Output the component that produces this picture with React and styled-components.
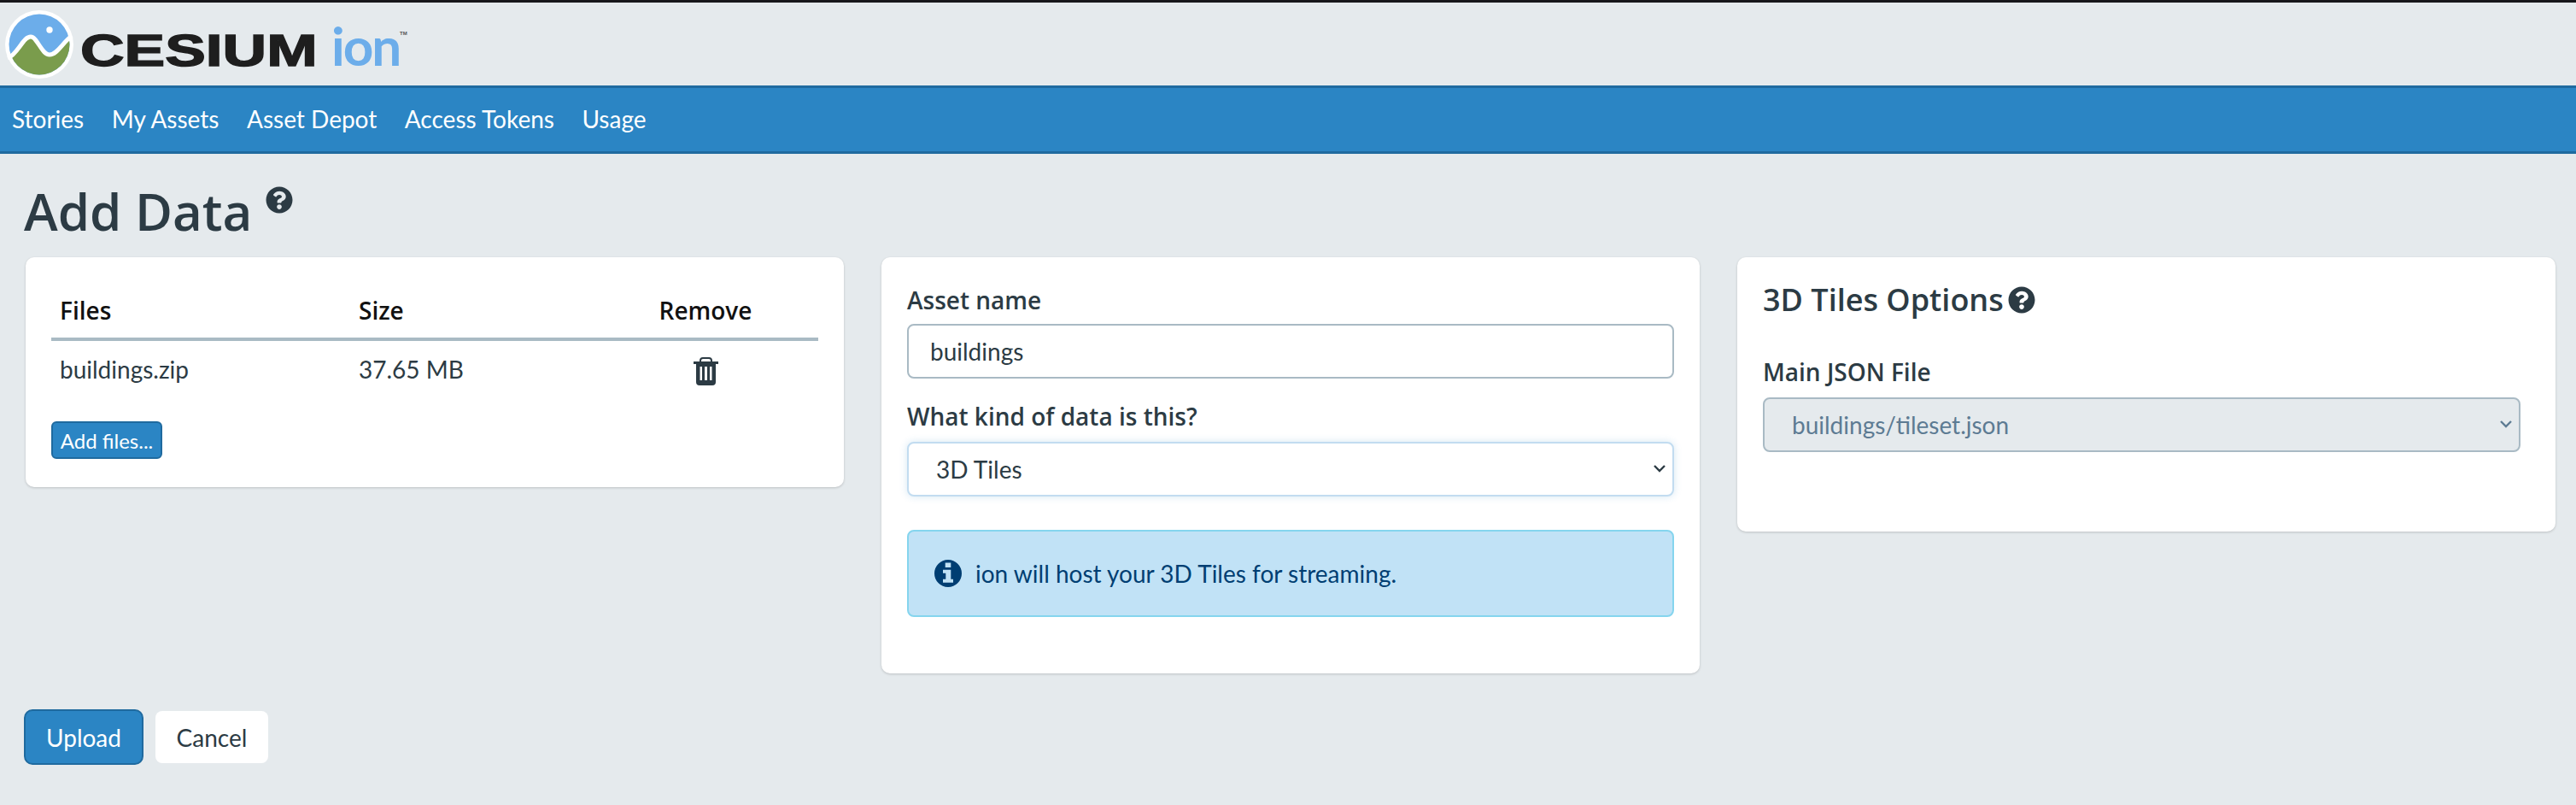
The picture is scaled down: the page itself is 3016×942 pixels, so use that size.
import React from 'react';
import styled, { createGlobalStyle } from 'styled-components';
import { FaQuestionCircle } from 'react-icons/fa';

const GlobalStyle = createGlobalStyle`
  html, body {
    margin: 0;
    padding: 0;
    background: #e5eaed;
  }
  body {
    font-family: Lato, "Liberation Sans", sans-serif;
    font-size: 28px;
    color: #2c3b44;
  }
`;

const Logo = () => (
  <LogoSvg viewBox="0 0 490 84" width="490" height="84">
    <defs>
      <clipPath id="globe">
        <circle cx="40" cy="40" r="35.5" />
      </clipPath>
    </defs>
    <circle cx="40" cy="40" r="40" fill="#fff" />
    <g clipPath="url(#globe)">
      <rect width="80" height="80" fill="#6cadea" />
      <path d="M3 56C11 53 16 43 22 36c4-5 9-7 13-2 6 7 10 18 17 18 9 0 15-14 26-22v50H3z" fill="#7a9c4c" />
    </g>
    <path d="M3 56C11 53 16 43 22 36c4-5 9-7 13-2 6 7 10 18 17 18 9 0 15-14 26-22" fill="none" stroke="#fff" strokeWidth="5" />
    <circle cx="52" cy="23" r="3.7" fill="#fff" />
    <text transform="translate(88 65) scale(1.4 1)" fontFamily="Liberation Sans" fontWeight="700" fontSize="51" fill="#1e1e1e" stroke="#1e1e1e" strokeWidth="1.4">
      CESIUM
    </text>
    <text x="382" y="65" fontFamily="Lato" fontWeight="700" fontSize="62" letterSpacing="-2" fill="#6cadea">
      ion
    </text>
    <text x="462" y="29" fontFamily="Liberation Sans" fontWeight="700" fontSize="6" fill="#555">
      TM
    </text>
  </LogoSvg>
);

const TrashIcon = () => (
  <svg viewBox="0 0 29 33" width="29" height="33">
    <path d="M8 6V4q0-3 3-3h7q3 0 3 3v2" fill="none" stroke="#2c3b44" strokeWidth="2" />
    <path
      fill="#2c3b44"
      fillRule="evenodd"
      d="M0 5h29v3h-3v21q0 4-4 4H7q-4 0-4-4V8H0zM7.500 11v16H10V11zM13 11v16h3V11zM19 11v16h2.500V11z"
    />
  </svg>
);

const InfoIcon = () => (
  <svg viewBox="0 0 32 32" width="32" height="32">
    <path
      fill="#003e72"
      fillRule="evenodd"
      d="M16 0a16 16 0 1 1 0 32a16 16 0 0 1 0-32zM12.700 3.500v5.500h6.600V3.500zM10 11.700v4h3.300v7H10v4h12v-4h-2.700v-11z"
    />
  </svg>
);

const Chevron = () => (
  <ChevronSvg viewBox="0 0 14 9" width="14" height="9">
    <path d="M1 1l6 6 6-6" fill="none" stroke="currentColor" strokeWidth="2.400" />
  </ChevronSvg>
);

const App = () => {
  return (
    <>
      <GlobalStyle />
      <Header>
        <Logo />
      </Header>
      <Nav>
        <NavLink>Stories</NavLink>
        <NavLink>My Assets</NavLink>
        <NavLink>Asset Depot</NavLink>
        <NavLink>Access Tokens</NavLink>
        <NavLink>Usage</NavLink>
      </Nav>
      <Main>
        <TitleRow>
          <Title>Add Data</Title>
          <TitleHelp>
            <FaQuestionCircle size={32} />
          </TitleHelp>
        </TitleRow>
        <Cards>
          <FilesCard>
            <FilesTable>
              <thead>
                <tr>
                  <FilesHead>Files</FilesHead>
                  <SizeHead>Size</SizeHead>
                  <RemoveHead>Remove</RemoveHead>
                </tr>
              </thead>
              <tbody>
                <tr>
                  <Cell>buildings.zip</Cell>
                  <Cell>37.65 MB</Cell>
                  <RemoveCell>
                    <TrashIcon />
                  </RemoveCell>
                </tr>
              </tbody>
            </FilesTable>
            <SmallButton>Add files...</SmallButton>
          </FilesCard>

          <FormCard>
            <Label>Asset name</Label>
            <TextInput defaultValue="buildings" />
            <Label>What kind of data is this?</Label>
            <KindSelectWrap>
              <Select $focused defaultValue="3D Tiles">
                <option>3D Tiles</option>
              </Select>
              <Chevron />
            </KindSelectWrap>
            <Alert>
              <InfoIcon />
              <span>ion will host your 3D Tiles for streaming.</span>
            </Alert>
          </FormCard>

          <OptionsCard>
            <OptionsTitle>
              3D Tiles Options
              <FaQuestionCircle size={32} />
            </OptionsTitle>
            <OptionsLabel>Main JSON File</OptionsLabel>
            <DisabledSelectWrap>
              <Select $disabled disabled defaultValue="buildings/tileset.json">
                <option>buildings/tileset.json</option>
              </Select>
              <Chevron />
            </DisabledSelectWrap>
          </OptionsCard>
        </Cards>
        <Actions>
          <PrimaryButton>Upload</PrimaryButton>
          <CancelButton>Cancel</CancelButton>
        </Actions>
      </Main>
    </>
  );
};

export default App;

const Header = styled.header`
  border-top: 3px solid #17171b;
  display: flex;
  align-items: flex-start;
  padding: 9px 0 0 6px;
  box-sizing: border-box;
  height: 100px;
`;

const LogoSvg = styled.svg`
  display: block;
`;

const Nav = styled.nav`
  height: 80px;
  box-sizing: border-box;
  background: #2b85c4;
  border-top: 3px solid #1f6a9f;
  border-bottom: 3px solid #1f6a9f;
  display: flex;
  align-items: center;
  gap: 32.5px;
  padding: 0 14px 2px;
`;

const NavLink = styled.a`
  color: #fff;
  font-size: 28px;
`;

const Main = styled.main`
  padding: 0 24px 0 28px;
`;

const TitleRow = styled.div`
  display: flex;
  align-items: flex-start;
  height: 121px;
  padding-top: 25px;
  box-sizing: border-box;
`;

const Title = styled.h1`
  margin: 0;
  font-family: "Open Sans", sans-serif;
  font-weight: 600;
  font-size: 60px;
  line-height: 84px;
  color: #2c3b44;
`;

const TitleHelp = styled.span`
  margin: 13px 0 0 16px;
  line-height: 0;
`;

const Cards = styled.div`
  display: grid;
  grid-template-columns: 958px 958px 958px;
  column-gap: 44px;
  align-items: start;
  margin-left: 2px;
`;

const Card = styled.section`
  background: #fff;
  border-radius: 10px;
  box-shadow: 0 1px 3px rgba(0, 0, 0, 0.18);
  box-sizing: border-box;
`;

const FilesCard = styled(Card)`
  height: 269px;
  padding: 30px 30px 0;
`;

const FormCard = styled(Card)`
  height: 487px;
  padding: 30px 30px 0;
`;

const OptionsCard = styled(Card)`
  height: 321px;
  padding: 30px 41px 0 30px;
`;

const FilesTable = styled.table`
  width: 100%;
  border-collapse: collapse;
  table-layout: fixed;
  margin-bottom: 28px;
`;

const HeadCell = styled.th`
  font-family: "Open Sans", sans-serif;
  font-weight: 600;
  text-align: left;
  color: #111;
  padding: 0 10px;
  height: 64px;
  border-bottom: 4px solid #a9bac4;
`;

const FilesHead = styled(HeadCell)`
  width: 330px;
`;

const SizeHead = styled(HeadCell)`
  width: 264px;
`;

const RemoveHead = styled(HeadCell)`
  text-align: center;
`;

const Cell = styled.td`
  padding: 0 10px;
  height: 62px;
  font-size: 28px;
`;

const RemoveCell = styled(Cell)`
  text-align: center;
  padding-top: 4px;
  line-height: 0;
`;

const SmallButton = styled.button`
  display: block;
  width: 130px;
  height: 44px;
  padding: 0;
  background: #2b85c4;
  border: 2px solid #1f6a9f;
  border-radius: 6px;
  color: #fff;
  font-family: Lato, sans-serif;
  font-size: 24px;
`;

const Label = styled.label`
  display: block;
  font-family: "Open Sans", sans-serif;
  font-weight: 600;
  font-size: 28px;
  line-height: 40px;
  margin-bottom: 8px;
`;

const TextInput = styled.input`
  display: block;
  width: 100%;
  height: 64px;
  box-sizing: border-box;
  border: 2px solid #a9bac4;
  border-radius: 8px;
  padding: 0 25px;
  margin-bottom: 24px;
  font-family: Lato, sans-serif;
  font-size: 28px;
  color: #2c3b44;
`;

const SelectWrap = styled.div`
  position: relative;
`;

const KindSelectWrap = styled(SelectWrap)`
  margin-top: 10px;
  color: #2c3b44;
`;

const DisabledSelectWrap = styled(SelectWrap)`
  color: #5d7b93;
`;

const Select = styled.select`
  display: block;
  width: 100%;
  height: 64px;
  box-sizing: border-box;
  appearance: none;
  border-radius: 8px;
  padding: 0 32px;
  font-family: Lato, sans-serif;
  font-size: 28px;
  opacity: 1;
  color: ${({ $disabled }) => ($disabled ? '#5d7b93' : '#2c3b44')};
  background: ${({ $disabled }) => ($disabled ? '#e5eaed' : '#fff')};
  border: 2px solid ${({ $focused }) => ($focused ? '#c2dcf0' : '#a9bac4')};
  box-shadow: ${({ $focused }) => ($focused ? '0 0 10px rgba(43, 133, 196, 0.2)' : 'none')};
`;

const ChevronSvg = styled.svg`
  position: absolute;
  right: 10px;
  top: 27px;
`;

const Alert = styled.div`
  display: flex;
  align-items: center;
  gap: 16px;
  height: 102px;
  box-sizing: border-box;
  margin-top: 39px;
  padding: 0 30px;
  background: #c1e2f6;
  border: 2px solid #85d5ee;
  border-radius: 8px;
  color: #003e72;
`;

const OptionsTitle = styled.h2`
  margin: 0 0 44px;
  display: flex;
  align-items: center;
  gap: 5px;
  font-family: "Open Sans", sans-serif;
  font-weight: 600;
  font-size: 36px;
  line-height: 40px;
  color: #2c3b44;
`;

const OptionsLabel = styled(Label)`
  margin-bottom: 10px;
`;

const Actions = styled.div`
  display: flex;
  align-items: center;
  gap: 14px;
  margin-top: 42px;
`;

const PrimaryButton = styled.button`
  width: 140px;
  height: 65px;
  background: #2b85c4;
  border: 2px solid #1f6a9f;
  border-radius: 10px;
  color: #fff;
  font-family: Lato, sans-serif;
  font-size: 28px;
`;

const CancelButton = styled.button`
  width: 132px;
  height: 61px;
  background: #fff;
  border: none;
  border-radius: 8px;
  color: #2c3b44;
  font-family: Lato, sans-serif;
  font-size: 28px;
`;
